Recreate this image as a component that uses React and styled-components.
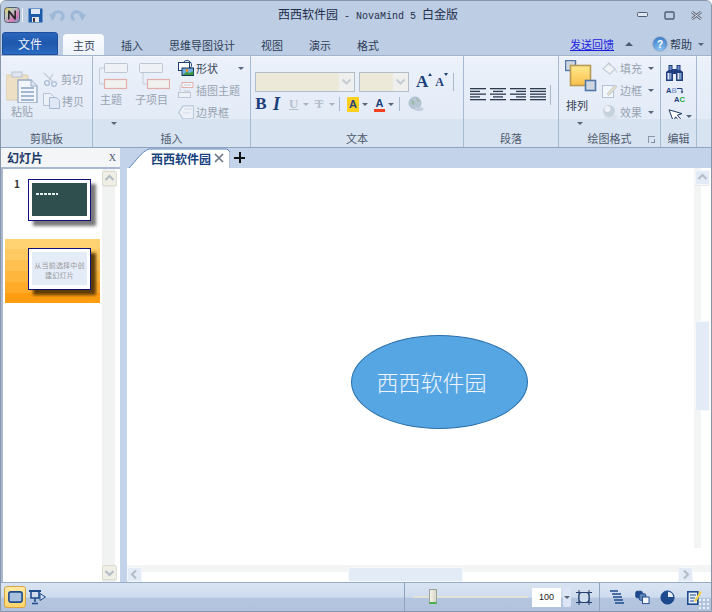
import styled, { createGlobalStyle } from "styled-components";

const Global = createGlobalStyle`
  html, body { margin: 0; padding: 0; background: #fff; }
  #root { width: 712px; height: 612px; overflow: hidden; }
  * { box-sizing: border-box; }
`;

const Win = styled.div`
  width: 712px;
  height: 612px;
  display: flex;
  flex-direction: column;
  border: 1px solid #8796a8;
  border-top-left-radius: 6px;
  border-top-right-radius: 6px;
  background: #bccde4;
  font-family: "Noto Sans CJK SC", sans-serif;
  font-size: 11px;
  color: #4a5666;
  overflow: hidden;
`;

/* title bar */
const TitleBar = styled.div`
  height: 26px;
  flex: none;
  display: flex;
  align-items: center;
  padding: 2px 0 0 3px;
  background: #bccde4;
`;
const QuickBar = styled.div`
  width: 274px;
  display: flex;
  align-items: center;
`;
const QuickDivider = styled.span`
  width: 1px;
  height: 14px;
  margin: 0 5px 0 2px;
  background: #eef3fa;
`;
const QuickGap = styled.span`
  width: ${(p) => p.$w}px;
`;
const Title = styled.div`
  margin-top: -3px;
  font-family: "Liberation Mono", "Noto Sans CJK SC", monospace;
  font-size: 10px;
  color: #1f2f4c;
  white-space: pre;
  span { font-family: "Noto Sans CJK SC", sans-serif; font-size: 12px; }
`;
const WinBtns = styled.div`
  margin-left: auto;
  display: flex;
  align-items: center;
  gap: 16px;
  padding: 0 9px 0 0;
`;

/* tab row */
const TabRow = styled.div`
  height: 28px;
  flex: none;
  display: flex;
  align-items: flex-end;
  padding-left: 1px;
  background: #bccde4;
`;
const FileTab = styled.div`
  width: 56px;
  height: 23px;
  margin-right: 5px;
  border-radius: 3px 3px 0 0;
  border: 1px solid #1d4f9c;
  background: linear-gradient(#2a66bd, #1e58ac 50%, #2b6cc4);
  color: #f2f6fc;
  font-size: 12px;
  display: flex;
  align-items: center;
  justify-content: center;
`;
const Tab = styled.div`
  height: ${(p) => (p.$on ? 21 : 20)}px;
  padding: 0 ${(p) => (p.$on ? "9px 0 10px" : "13px")};
  margin-right: ${(p) => (p.$on ? 4 : 0)}px;
  border-radius: 4px 4px 0 0;
  background: ${(p) => (p.$on ? "linear-gradient(#fbfcfe, #eef3fa)" : "transparent")};
  color: #2e3d55;
  display: flex;
  align-items: center;
  white-space: nowrap;
`;
const TabTools = styled.div`
  margin-left: auto;
  height: 22px;
  display: flex;
  align-items: center;
  padding-right: 7px;
  color: #2e3d55;
`;
const Feedback = styled.a`
  color: #1a1ae0;
  text-decoration: underline;
  margin-right: 11px;
`;
const Help = styled.div`
  display: flex;
  align-items: center;
  gap: 2px;
  margin: 0 6px 0 19px;
`;

/* triangles */
const Drop = styled.i`
  display: inline-block;
  flex: none;
  width: 0;
  height: 0;
  border-left: 3px solid transparent;
  border-right: 3px solid transparent;
  border-top: 3px solid ${(p) => p.$c || "#59677a"};
`;
const Up = styled.i`
  display: inline-block;
  width: 0;
  height: 0;
  border-left: 4px solid transparent;
  border-right: 4px solid transparent;
  border-bottom: 4px solid #4b5a70;
`;
const Caret = styled.i`
  flex: none;
  align-self: flex-start;
  width: 0;
  height: 0;
  margin: 1px ${(p) => p.$mr || 0}px 0 0;
  border-left: 2.5px solid transparent;
  border-right: 2.5px solid transparent;
  border-${(p) => (p.$down ? "top" : "bottom")}: 3px solid #1b3f7a;
`;

/* ribbon */
const Ribbon = styled.div`
  height: 93px;
  flex: none;
  display: flex;
  border-top: 1px solid #9fb3cc;
  border-bottom: 1px solid #8ea3bf;
  background: #e6edf8;
`;
const Group = styled.div`
  width: ${(p) => p.$w}px;
  flex: ${(p) => (p.$w ? "none" : "1")};
  display: flex;
  flex-direction: column;
  border-right: ${(p) => (p.$w ? "1px solid #a6b9d2" : "none")};
`;
const GroupBody = styled.div`
  height: 63px;
  flex: none;
  display: flex;
  padding: ${(p) => p.$pad || "0"};
  border-top: 1px solid #f4f7fc;
  background: linear-gradient(#ecf1fa, #e3ebf7);
`;
const Caption = styled.div`
  flex: 1;
  position: relative;
  display: flex;
  align-items: flex-end;
  justify-content: center;
  padding-bottom: 1px;
  background: #d8e3f2;
  color: #4d5a6c;
  line-height: 16px;
`;
const CaptionDrop = styled.span`
  position: absolute;
  top: 3px;
  left: ${(p) => p.$x}px;
  display: flex;
`;
const Launcher = styled.span`
  position: absolute;
  right: 5px;
  bottom: 4px;
  width: 7px;
  height: 7px;
  border-left: 1px solid #8a97a8;
  border-top: 1px solid #8a97a8;
  &::after {
    content: "";
    position: absolute;
    right: 0;
    bottom: 0;
    width: 3px;
    height: 3px;
    border-right: 1px solid #7f8c9e;
    border-bottom: 1px solid #7f8c9e;
  }
`;
const BigBtn = styled.div`
  width: ${(p) => p.$w}px;
  flex: none;
  display: flex;
  flex-direction: column;
  align-items: ${(p) => (p.$start ? "flex-start" : "center")};
  padding-top: ${(p) => p.$top}px;
  color: ${(p) => (p.$dark ? "#333f50" : "#98a3b1")};
  line-height: 14px;
  svg { margin-left: ${(p) => p.$iconLeft || 0}px; }
`;
const BigLabel = styled.span`
  margin-top: ${(p) => p.$gap}px;
  margin-left: ${(p) => p.$ml || 0}px;
  white-space: nowrap;
`;
const Stack = styled.div`
  display: flex;
  flex-direction: column;
  margin-left: ${(p) => p.$left || 0}px;
  padding-top: ${(p) => p.$top || 0}px;
  width: ${(p) => (p.$w ? p.$w + "px" : "auto")};
`;
const RowBtn = styled.div`
  height: ${(p) => p.$h || 22}px;
  flex: none;
  display: flex;
  align-items: center;
  gap: 2px;
  padding: ${(p) => p.$pt || 0}px 0 0 ${(p) => p.$pl || 0}px;
  color: ${(p) => (p.$dark ? "#3a4657" : "#98a3b1")};
  white-space: nowrap;
  i:last-child { margin-left: auto; }
`;

/* font group */
const FontRows = styled.div`
  display: flex;
  flex-direction: column;
  padding: 15px 0 0 4px;
  width: 100%;
`;
const FontRow = styled.div`
  display: flex;
  align-items: center;
  height: ${(p) => p.$h}px;
  margin-bottom: ${(p) => p.$mb || 0}px;
`;
const Combo = styled.div`
  width: ${(p) => p.$w}px;
  height: 20px;
  flex: none;
  margin-right: ${(p) => p.$mr}px;
  display: flex;
  justify-content: flex-end;
  border: 1px solid #b3bdc9;
  background: #ece9d8;
`;
const ComboBtn = styled.div`
  width: 15px;
  display: flex;
  align-items: center;
  justify-content: center;
  background: #eff0ee;
  svg { display: block; }
`;
const Sep = styled.span`
  width: 1px;
  flex: none;
  height: ${(p) => p.$h}px;
  margin: 0 ${(p) => p.$r || 0}px 0 ${(p) => p.$l || 0}px;
  background: #a9b8cb;
`;
const Glyph = styled.span`
  flex: none;
  width: ${(p) => p.$w}px;
  margin: 0 ${(p) => p.$mr || 0}px 0 ${(p) => p.$ml || 0}px;
  font-family: "Liberation Serif", serif;
  font-size: ${(p) => p.$size}px;
  font-weight: 700;
  font-style: ${(p) => (p.$it ? "italic" : "normal")};
  text-decoration: ${(p) => p.$deco || "none"};
  color: ${(p) => p.$c || "#1b3f7a"};
  text-align: center;
  line-height: 14px;
`;
const Marker = styled.span`
  flex: none;
  width: ${(p) => p.$w}px;
  height: 15px;
  margin: 0 3px 0 ${(p) => p.$ml || 0}px;
  background: ${(p) => p.$bg};
  border-bottom: ${(p) => (p.$line ? `3px solid ${p.$line}` : "none")};
  font-family: "Liberation Sans", sans-serif;
  font-weight: 700;
  font-size: 11px;
  line-height: ${(p) => (p.$line ? 12 : 15)}px;
  text-align: center;
  color: #1f4278;
`;
const AlignRow = styled.div`
  display: flex;
  align-items: center;
  gap: 4px;
  padding: 15px 0 0 6px;
  height: 60px;
`;
const Svg = styled.svg`
  display: block;
  flex: none;
`;
const FlipSvg = styled(Svg)`
  transform: scaleX(-1);
`;

/* main area */
const Main = styled.div`
  flex: 1;
  min-height: 0;
  display: flex;
  background: #c3d3e9;
`;
const Side = styled.div`
  width: 119px;
  flex: none;
  display: flex;
  flex-direction: column;
`;
const SideHead = styled.div`
  height: 21px;
  flex: none;
  display: flex;
  align-items: center;
  justify-content: space-between;
  padding: 0 4px 0 6px;
  background: #f3f5f7;
  border-bottom: 2px solid #a7b8cf;
  font-size: 12px;
  font-weight: 700;
  color: #1e3a66;
`;
const Closer = styled.span`
  font-family: "Liberation Serif", serif;
  font-size: 10px;
  font-weight: 400;
  color: #4b5a70;
`;
const SideBody = styled.div`
  flex: 1;
  min-height: 0;
  display: flex;
  background: #fff;
  border-left: 2px solid #a7b8cf;
`;
const SlideList = styled.div`
  width: 99px;
  flex: none;
  display: flex;
  flex-direction: column;
  padding: 10px 0 0 2px;
`;
const SlideItem = styled.div`
  width: 95px;
  height: ${(p) => p.$h}px;
  flex: none;
  display: flex;
  align-items: flex-start;
  padding: ${(p) => p.$top}px 0 0 23px;
  position: relative;
  background: ${(p) =>
    p.$on
      ? `linear-gradient(#ffd272 0 10px, #ffca62 10px 21px, #ffc050 21px 32px, #ffb63c 32px 43px, #ffaa28 43px 54px, #ff9c10 54px)`
      : "transparent"};
`;
const SlideNo = styled.span`
  position: absolute;
  left: 9px;
  top: -3px;
  font-size: 10px;
  font-weight: 700;
  color: #333;
`;
const Thumb = styled.div`
  width: 63px;
  height: 42px;
  padding: 3px 3px 4px;
  background: #fff;
  border: 1px solid #10107a;
  box-shadow: 5px 5px 3px ${(p) => p.$shadow};
  display: flex;
`;
const ThumbInner = styled.div`
  flex: 1;
  background: ${(p) => p.$bg};
  color: ${(p) => p.$c};
  font-size: ${(p) => p.$size}px;
  letter-spacing: 0.2px;
  line-height: 10px;
  text-align: center;
  padding: ${(p) => p.$pad};
`;
const MiniText = styled.div`
  width: 22px;
  height: 2px;
  margin: 10px 0 0 4px;
  background: repeating-linear-gradient(90deg, #e8eeee 0 3px, #2f4f4f 3px 4px);
`;

const SideRail = styled.div`
  width: 15px;
  flex: none;
  display: flex;
  flex-direction: column;
  justify-content: space-between;
  padding: 2px 0;
  background: linear-gradient(90deg, #f1f3f2 0 13px, #fff 13px);
`;
const Splitter = styled.div`
  width: 7px;
  flex: none;
`;
const Doc = styled.div`
  flex: 1;
  min-width: 0;
  display: flex;
  flex-direction: column;
`;
const DocTabs = styled.div`
  height: 20px;
  flex: none;
  display: flex;
  align-items: flex-end;
  padding-left: 2px;
`;
const DocTab = styled.div`
  width: 101px;
  height: 20px;
  position: relative;
  display: flex;
  align-items: center;
  padding-left: 22px;
  gap: 3px;
  font-size: 12px;
  font-weight: 700;
  color: #17427f;
  svg.shape { position: absolute; left: 0; top: 0; }
  span, svg.x { position: relative; }
`;
const Plus = styled.div`
  margin: 0 0 1px 4px;
  width: 11px;
  height: 11px;
  align-self: center;
  background:
    linear-gradient(#111, #111) center / 11px 2px no-repeat,
    linear-gradient(#111, #111) center / 2px 11px no-repeat;
`;
const CanvasWrap = styled.div`
  flex: 1;
  min-height: 0;
  position: relative;
  display: flex;
  flex-direction: column;
  background: #fff;
`;
const Canvas = styled.div`
  flex: 1;
  position: relative;
`;
const Node = styled.div`
  position: absolute;
  left: 224px;
  top: 167px;
  width: 177px;
  height: 94px;
  border-radius: 50%;
  border: 1px solid #2a6fa9;
  background: #56a6e4;
  color: #eef5fc;
  font-size: 22px;
  font-weight: 300;
  display: flex;
  align-items: center;
  justify-content: center;
  padding: 0 16px 3px 0;
`;
const VScroll = styled.div`
  position: absolute;
  right: 0;
  top: 0;
  bottom: 17px;
  width: 17px;
  background: linear-gradient(90deg, #f3f5f5 0 7px, #fff 7px);
  display: flex;
  flex-direction: column;
  align-items: flex-end;
  padding: 2px 1px 0 0;
`;
const HScroll = styled.div`
  height: 17px;
  flex: none;
  display: flex;
  align-items: flex-end;
  padding-right: 18px;
  background: linear-gradient(#f3f5f5 0 7px, #fff 7px);
`;
const ScrollBtn = styled.div`
  width: ${(p) => p.$w || 15}px;
  height: 15px;
  flex: none;
  display: flex;
  align-items: center;
  justify-content: center;
  border-radius: 2px;
  border: 1px solid ${(p) => (p.$warm ? "#dcdcd0" : "#f4f7fc")};
  background: ${(p) => (p.$warm ? "#efefe6" : "#e3ebf7")};
  box-shadow: 0 1px 0 #e8e8e8;
`;
const VThumb = styled.div`
  width: 15px;
  height: 90px;
  margin-top: 136px;
  border-radius: 2px;
  border: 1px solid #f6f8fc;
  background: #e3ebf7;
`;
const HThumb = styled.div`
  width: 115px;
  height: 15px;
  margin-left: ${(p) => p.$left}px;
  margin-right: auto;
  border-radius: 2px;
  border: 1px solid #f6f8fc;
  background: #e3ebf7;
`;

/* status bar */
const Status = styled.div`
  height: 29px;
  flex: none;
  display: flex;
  align-items: center;
  position: relative;
  padding-left: 3px;
  border-top: 1px solid #98abc5;
  background: linear-gradient(#d9e4f2, #cfdcee 50%, #b4c6df 55%, #b2c4dd);
`;
const ViewBtn = styled.div`
  width: 22px;
  height: 22px;
  display: flex;
  align-items: center;
  justify-content: ${(p) => (p.$on ? "center" : "flex-start")};
  margin-right: 2px;
  border-radius: 3px;
  border: ${(p) => (p.$on ? "1px solid #d9a441" : "1px solid transparent")};
  background: ${(p) => (p.$on ? "linear-gradient(#ffeaa6, #ffd46a)" : "transparent")};
`;
const ZoomBox = styled.div`
  margin-left: auto;
  width: 196px;
  height: 100%;
  display: flex;
  align-items: center;
  padding-left: 8px;
  border-left: 1px solid #8fa3be;
  border-right: 1px solid #8fa3be;
`;
const Slider = styled.div`
  width: 115px;
  height: 2px;
  flex: none;
  position: relative;
  margin-right: 4px;
  background: #e4e1d2;
`;
const SliderThumb = styled.div`
  position: absolute;
  left: 16px;
  top: -7px;
  width: 8px;
  height: 15px;
  border: 1px solid #9aa59a;
  border-bottom: 2px solid #4ab04a;
  background: linear-gradient(90deg, #f4f2ea, #d8d6c8);
`;
const ZoomInput = styled.div`
  width: 29px;
  height: 19px;
  flex: none;
  background: #fff;
  font-family: "Liberation Sans", sans-serif;
  font-size: 9px;
  color: #222;
  line-height: 19px;
  text-align: center;
  margin-right: 2px;
`;
const Spin = styled.div`
  width: 8px;
  height: 19px;
  flex: none;
  display: flex;
  align-items: center;
  justify-content: center;
  margin-right: 5px;
  border-radius: 2px;
  background: #dbe5f3;
`;
const RightTools = styled.div`
  width: 111px;
  flex: none;
  display: flex;
  align-items: center;
  gap: 10px;
  padding-left: 10px;
`;
const Grip = styled.div`
  position: absolute;
  right: 1px;
  bottom: 1px;
  width: 11px;
  height: 11px;
  background: radial-gradient(circle at 1px 1px, #eef3fa 1px, transparent 1.2px) 0 0 / 4px 4px;
`;

/* drawings */
const AppLogo = () => (
  <Svg width="16" height="16" viewBox="0 0 16 16">
    <defs>
      <linearGradient id="lg" x1="0" y1="0" x2="1" y2="1">
        <stop offset="0" stopColor="#f0d050" />
        <stop offset=".35" stopColor="#b8c8c0" />
        <stop offset=".7" stopColor="#d878b8" />
        <stop offset="1" stopColor="#60b0d0" />
      </linearGradient>
    </defs>
    <rect x=".5" y=".5" width="15" height="15" rx="3" fill="url(#lg)" stroke="#55606e" />
    <path d="M4 12.5V3.5h1.6l4.8 6V3.5H12v9h-1.6l-4.8-6v6z" fill="#2a2a2a" />
  </Svg>
);
const Save = () => (
  <Svg width="15" height="15" viewBox="0 0 15 15">
    <path d="M.5.5h14v14H.5z" fill="#1d5ca8" />
    <rect x="3" y="1" width="9" height="5" fill="#dfe8f4" />
    <rect x="4" y="9" width="7" height="5" fill="#e6e6e6" />
    <rect x="5" y="10" width="2" height="4" fill="#3a3a3a" />
  </Svg>
);
const CurvePaths = () => (
  <>
    <path d="M3.5 8C3.5 3 11 1 13.5 5c1.5 2.5 0 5-2 6" fill="none" stroke="#9db8d8" strokeWidth="3" />
    <path d="M0 5l7 1-3.5 6z" fill="#9db8d8" />
  </>
);
const Undo = () => (
  <Svg width="16" height="13" viewBox="0 0 16 13">
    <CurvePaths />
  </Svg>
);
const Redo = () => (
  <FlipSvg width="16" height="13" viewBox="0 0 16 13">
    <CurvePaths />
  </FlipSvg>
);
const MinIcon = () => (
  <Svg width="11" height="6" viewBox="0 0 11 6"><rect x=".5" y=".5" width="10" height="4" rx="1" fill="#dfe7f2" stroke="#4e5d70" /></Svg>
);
const MaxIcon = () => (
  <Svg width="11" height="9" viewBox="0 0 11 9"><rect x="1" y="1" width="9" height="7" rx="1" fill="none" stroke="#4e5d70" strokeWidth="1.4" /></Svg>
);
const CloseIcon = () => (
  <Svg width="11" height="9" viewBox="0 0 11 9"><path d="M1 1l9 7M10 1L1 8" stroke="#5a6778" strokeWidth="2.8" /><path d="M1 1l9 7M10 1L1 8" stroke="#e8eef6" strokeWidth="1" /></Svg>
);
const HelpIcon = () => (
  <Svg width="16" height="16" viewBox="0 0 16 16">
    <defs>
      <radialGradient id="hp" cx=".5" cy=".85" r=".8">
        <stop offset="0" stopColor="#8cc4f4" />
        <stop offset="1" stopColor="#3f7fc8" />
      </radialGradient>
    </defs>
    <circle cx="8" cy="8" r="7.5" fill="url(#hp)" stroke="#a8b8cc" />
    <text x="8" y="12" fontSize="10" fontWeight="700" textAnchor="middle" fill="#fff" fontFamily="Liberation Sans">?</text>
  </Svg>
);
const Paste = () => (
  <Svg width="32" height="32" viewBox="0 0 32 32">
    <rect x="0" y="4" width="22" height="25" rx="1" fill="#ecdfc4" stroke="#d8ccb0" />
    <rect x="6" y="1" width="10" height="5" fill="#dfe6ee" stroke="#b8c4d4" />
    <path d="M12 9h13l6 6v17H12z" fill="#f2f6fb" stroke="#96aac4" strokeWidth="1.3" />
    <path d="M25 9v6h6" fill="#dde6f2" stroke="#96aac4" />
    <path d="M15 17h13M15 21h13M15 25h13M15 29h13" stroke="#8ca4c4" strokeWidth="1.3" />
  </Svg>
);
const Scissors = () => (
  <Svg width="16" height="15" viewBox="0 0 16 15">
    <circle cx="4" cy="11" r="2.4" fill="none" stroke="#a9bdd8" strokeWidth="1.3" />
    <circle cx="11" cy="12" r="2.4" fill="none" stroke="#a9bdd8" strokeWidth="1.3" />
    <path d="M1 1l9 9M5.5 9L10 2" stroke="#c2cad4" strokeWidth="1.3" />
  </Svg>
);
const Copy = () => (
  <Svg width="17" height="16" viewBox="0 0 17 16">
    <path d="M.5.5h7l3 3v9H.5z" fill="#eef2f8" stroke="#b2c2d8" />
    <path d="M6.5 4.5h7l3 3v8h-10z" fill="#dfe8f4" stroke="#a6b9d2" />
  </Svg>
);
const Topic = ({ child }) => (
  <Svg width="31" height="27" viewBox="0 0 31 27">
    <rect x={child ? 0.5 : 5.5} y="0.5" width="23" height="9" rx="1" fill="#eef2f7" stroke="#bcc7d3" />
    <path d={child ? "M4 10v11h4" : "M5 5H.5v16H5"} fill="none" stroke="#c3ccd6" />
    <rect x={child ? 8.5 : 5.5} y="16.5" width="22" height="9" fill="#f1f1ef" stroke="#e2b0ab" strokeWidth="1.2" />
  </Svg>
);
const ShapeIcon = () => (
  <Svg width="16" height="16" viewBox="0 0 16 16">
    <circle cx="9" cy="5" r="4.5" fill="#fff" stroke="#1d3f72" />
    <rect x=".5" y="2.5" width="11" height="8" fill="#fff" stroke="#1d3f72" />
    <rect x="4" y="8" width="11.5" height="7.5" fill="#6fb0e0" stroke="#14305c" />
    <path d="M4.5 15l4-3 3 1 4-2v4z" fill="#3d9a40" />
    <circle cx="9" cy="10.5" r="1.4" fill="#f0902a" />
  </Svg>
);
const PicTheme = () => (
  <Svg width="16" height="16" viewBox="0 0 16 16">
    <rect x="4" y=".5" width="11" height="5" fill="#f4f6f9" stroke="#e2b0ab" />
    <path d="M6 3h7M6 9h6" stroke="#c3ccd6" />
    <path d="M2 3v9" stroke="#ccd4de" />
    <rect x=".5" y="10.5" width="12" height="5" fill="#eef2f7" stroke="#bcc7d3" />
  </Svg>
);
const Boundary = () => (
  <Svg width="16" height="15" viewBox="0 0 16 15">
    <path d="M5 .8h10.5v13H5L.8 7.5z" fill="#eef2f8" stroke="#bcc9da" strokeWidth="1.3" />
    <path d="M6 4h8M5 8h7" stroke="#d3dbe6" />
  </Svg>
);
const Arrow = () => (
  <Svg width="11" height="8" viewBox="0 0 11 8"><path d="M1.5 1.5l4 4 4-4" fill="none" stroke="#c6ccd3" strokeWidth="2" /></Svg>
);
const Globe = () => (
  <Svg width="16" height="16" viewBox="0 0 16 16">
    <circle cx="7" cy="7" r="6" fill="#b6c8d6" stroke="#a8bccd" />
    <path d="M3 4l3 1 1 3-3 1zM8 2l3 2-1 3z" fill="#9fbaa8" />
    <ellipse cx="11" cy="13" rx="4.5" ry="2" fill="#c3cfdc" />
  </Svg>
);
const AlignIcon = ({ kind }) => {
  const rows = {
    left: [[0, 16], [0, 10], [0, 16], [0, 10], [0, 16]],
    center: [[0, 16], [3, 10], [0, 16], [3, 10], [0, 16]],
    right: [[0, 16], [6, 10], [0, 16], [6, 10], [0, 16]],
    full: [[0, 16], [0, 16], [0, 16], [0, 16], [0, 16]],
  }[kind];
  return (
    <Svg width="16" height="13" viewBox="0 0 16 13">
      {rows.map(([x, w], i) => (
        <rect key={i} x={x} y={i * 2.75} width={w} height="1.3" fill="#2d3a4e" />
      ))}
    </Svg>
  );
};
const Arrange = () => (
  <Svg width="32" height="32" viewBox="0 0 32 32">
    <rect x=".5" y=".5" width="10" height="10" fill="#cfd6e0" stroke="#4f78a8" strokeWidth="1.4" />
    <defs>
      <linearGradient id="ar" x1="0" y1="0" x2="0" y2="1">
        <stop offset="0" stopColor="#ffe98e" />
        <stop offset="1" stopColor="#f9bf4c" />
      </linearGradient>
    </defs>
    <rect x="5.5" y="5.5" width="20" height="20" fill="url(#ar)" stroke="#b99a55" strokeWidth="1.6" />
    <rect x="20.5" y="20.5" width="10" height="10" fill="#cfd6e0" stroke="#4f78a8" strokeWidth="1.6" />
  </Svg>
);
const Fill = () => (
  <Svg width="16" height="15" viewBox="0 0 16 15">
    <path d="M1 8l6-6 6 6-5 5z" fill="#f1f3f6" stroke="#c3cdd9" strokeWidth="1.2" />
    <path d="M6 1l2 4M13 8c1 2 2 3 1.5 4" stroke="#c3cdd9" fill="none" />
  </Svg>
);
const Border = () => (
  <Svg width="16" height="15" viewBox="0 0 16 15">
    <rect x=".5" y="2.5" width="11" height="12" fill="#f4f7fb" stroke="#b2c2d8" />
    <path d="M5 11l8-9 2 1.5-8 9z" fill="#e6dfc4" stroke="#c3cdd9" />
  </Svg>
);
const Effect = () => (
  <Svg width="16" height="16" viewBox="0 0 16 16">
    <ellipse cx="9" cy="12.5" rx="6.5" ry="3" fill="#dbe2ea" />
    <circle cx="7" cy="7" r="6" fill="#c6d1de" />
    <circle cx="5.5" cy="5" r="3" fill="#eef2f7" />
  </Svg>
);
const Binoculars = () => (
  <Svg width="17" height="16" viewBox="0 0 17 16">
    <path d="M2.5 0h4v4h4V0h4v5l2.5 2v9h-7V9h-3v7H0V7l2.5-2z" fill="#1f3f80" />
    <rect x="3.5" y="1" width="2" height="4" fill="#6f8fc4" />
    <rect x="11.5" y="1" width="2" height="4" fill="#6f8fc4" />
    <rect x="1.5" y="8" width="2" height="6.5" fill="#dfe8f6" />
    <rect x="3.5" y="8" width="2" height="6.5" fill="#7f9bc8" />
    <rect x="11.5" y="8" width="2" height="6.5" fill="#dfe8f6" />
    <rect x="13.5" y="8" width="2" height="6.5" fill="#7f9bc8" />
  </Svg>
);
const Replace = () => (
  <Svg width="21" height="16" viewBox="0 0 21 16">
    <text x="0" y="7" fontSize="7.5" fontWeight="700" fontFamily="Liberation Sans" fill="#1f3f80">A</text>
    <text x="5.5" y="7" fontSize="7.5" fontWeight="700" fontFamily="Liberation Sans" fill="#8ea4c8">B</text>
    <path d="M11 2.5h5V6" fill="none" stroke="#1f3f80" />
    <path d="M14.5 5.5h3l-1.5 2z" fill="#1f3f80" />
    <text x="8" y="15.5" fontSize="7.5" fontWeight="700" fontFamily="Liberation Sans" fill="#1f3f80">A</text>
    <text x="13.5" y="15.5" fontSize="7.5" fontWeight="700" fontFamily="Liberation Sans" fill="#22a83a">C</text>
  </Svg>
);
const Pointer = () => (
  <Svg width="15" height="14" viewBox="0 0 15 14">
    <path d="M1 .8l4.4 11.6 2.2-4.6 4.2 5 1.8-1.6-4.2-5 4.6-1.6z" fill="#fff" stroke="#1c3a66" />
  </Svg>
);
const Chevron = ({ dir, color = "#b5bdc8" }) => (
  <Svg width="11" height="11" viewBox="0 0 11 11">
    <path
      d={{ up: "M1.5 7l4-4 4 4", down: "M1.5 4l4 4 4-4", left: "M7 1.5l-4 4 4 4", right: "M4 1.5l4 4-4 4" }[dir]}
      fill="none"
      stroke={color}
      strokeWidth="2.2"
    />
  </Svg>
);
const TabShape = () => (
  <Svg className="shape" width="101" height="20" viewBox="0 0 101 20">
    <path d="M0 20C8 12 12 4 20 1h78l3 3v16z" fill="#fff" />
    <path d="M0 20C8 12 12 4 20 1h78l3 3v16" fill="none" stroke="#5f86b8" />
  </Svg>
);
const TabClose = () => (
  <Svg className="x" width="10" height="10" viewBox="0 0 10 10"><path d="M1 1l8 8M9 1L1 9" stroke="#6b7786" strokeWidth="1.7" /></Svg>
);
const NormalView = () => (
  <Svg width="15" height="12" viewBox="0 0 15 12"><rect x=".9" y=".9" width="13.2" height="10.2" rx="2" fill="#a9c0de" stroke="#1d4a8c" strokeWidth="1.6" /></Svg>
);
const ShowView = () => (
  <Svg width="17" height="15" viewBox="0 0 17 15">
    <rect x="0" y="0" width="12" height="2" fill="#1d4a8c" />
    <path d="M2 2v6h8V2M6 8v4M3 13.5h6" fill="none" stroke="#1d4a8c" strokeWidth="1.6" />
    <path d="M11 3.5l5.5 3.5L11 10.5z" fill="#cfdcee" stroke="#1d4a8c" />
  </Svg>
);
const Fit = () => (
  <Svg width="16" height="15" viewBox="0 0 16 15">
    <path d="M3 0v15M13 0v15M0 2.5h16M0 12.5h16" stroke="#24406e" />
    <rect x="3" y="2.5" width="10" height="10" rx="3" fill="#cfdcee" stroke="#24406e" strokeWidth="1.2" />
  </Svg>
);
const Outline = () => (
  <Svg width="15" height="14" viewBox="0 0 15 14">
    <path d="M0 1h8M2 4h9M3 7h9M4 10h9M5 13h9" stroke="#1d4a8c" strokeWidth="1.5" />
  </Svg>
);
const Layers = () => (
  <Svg width="15" height="15" viewBox="0 0 16 15">
    <rect x=".8" y=".8" width="7" height="7" rx="1.5" fill="#1d4a8c" stroke="#1d4a8c" />
    <rect x="4.5" y="3.5" width="7" height="7" rx="1.5" fill="#5f86b8" stroke="#1d4a8c" />
    <rect x="8" y="7" width="7" height="7" fill="#f2f6fb" stroke="#1d4a8c" />
  </Svg>
);
const Pie = () => (
  <Svg width="15" height="15" viewBox="0 0 15 15">
    <circle cx="7.5" cy="7.5" r="6.6" fill="#1d4a8c" stroke="#1d4a8c" />
    <path d="M8 1.8A5.7 5.7 0 0 1 13.2 7H8z" fill="#e8eef8" />
  </Svg>
);
const Notes = () => (
  <Svg width="17" height="15" viewBox="-2 0 17 15">
    <rect x=".8" y="1.8" width="10" height="12.4" fill="#e8eef8" stroke="#1d4a8c" strokeWidth="1.6" />
    <path d="M3 5h6M3 8h5M3 11h4" stroke="#1d4a8c" strokeWidth="1.2" />
    <path d="M7 11l6-10 2 1-6 10z" fill="#f4d24a" />
  </Svg>
);

export default function App() {
  return (
    <>
      <Global />
      <Win>
        <TitleBar>
          <QuickBar>
            <AppLogo />
            <QuickDivider />
            <Save />
            <QuickGap $w={6} />
            <Undo />
            <QuickGap $w={5} />
            <Redo />
          </QuickBar>
          <Title>
            <span>西西软件园</span> - NovaMind 5 <span>白金版</span>
          </Title>
          <WinBtns>
            <MinIcon />
            <MaxIcon />
            <CloseIcon />
          </WinBtns>
        </TitleBar>

        <TabRow>
          <FileTab>文件</FileTab>
          <Tab $on>主页</Tab>
          <Tab>插入</Tab>
          <Tab>思维导图设计</Tab>
          <Tab>视图</Tab>
          <Tab>演示</Tab>
          <Tab>格式</Tab>
          <TabTools>
            <Feedback>发送回馈</Feedback>
            <Up />
            <Help>
              <HelpIcon />
              帮助
            </Help>
            <Drop />
          </TabTools>
        </TabRow>

        <Ribbon>
          <Group $w={92}>
            <GroupBody $pad="0 0 0 4px">
              <BigBtn $w={34} $top={14}>
                <Paste />
                <BigLabel $gap={1}>粘贴</BigLabel>
              </BigBtn>
              <Stack $left={4} $top={11}>
                <RowBtn>
                  <Scissors />
                  剪切
                </RowBtn>
                <RowBtn>
                  <Copy />
                  拷贝
                </RowBtn>
              </Stack>
            </GroupBody>
            <Caption>剪贴板</Caption>
          </Group>

          <Group $w={158}>
            <GroupBody $pad="0 0 0 6px">
              <BigBtn $w={36} $top={6} $start>
                <Topic />
                <BigLabel $gap={2} $ml={1}>主题</BigLabel>
              </BigBtn>
              <BigBtn $w={37} $top={6} $start $iconLeft={4}>
                <Topic child />
                <BigLabel $gap={2}>子项目</BigLabel>
              </BigBtn>
              <Stack $left={6} $w={66}>
                <RowBtn $dark>
                  <ShapeIcon />
                  形状
                  <Drop />
                </RowBtn>
                <RowBtn>
                  <PicTheme />
                  插图主题
                </RowBtn>
                <RowBtn>
                  <Boundary />
                  边界框
                </RowBtn>
              </Stack>
            </GroupBody>
            <Caption>
              <CaptionDrop $x={18}>
                <Drop />
              </CaptionDrop>
              插入
            </Caption>
          </Group>

          <Group $w={213}>
            <GroupBody>
              <FontRows>
                <FontRow $h={20} $mb={5}>
                  <Combo $w={100} $mr={4}>
                    <ComboBtn>
                      <Arrow />
                    </ComboBtn>
                  </Combo>
                  <Combo $w={50} $mr={7}>
                    <ComboBtn>
                      <Arrow />
                    </ComboBtn>
                  </Combo>
                  <Glyph $w={12} $size={17}>A</Glyph>
                  <Caret $mr={3} />
                  <Glyph $w={9} $size={12}>A</Glyph>
                  <Caret $down $mr={5} />
                  <Sep $h={18} />
                </FontRow>
                <FontRow $h={14}>
                  <Glyph $w={12} $mr={4} $size={17}>B</Glyph>
                  <Glyph $w={11} $mr={7} $size={18} $it>I</Glyph>
                  <Glyph $w={9} $mr={5} $size={13} $c="#b5c0ce" $deco="underline">U</Glyph>
                  <Drop $c="#a8b2c0" />
                  <Glyph $w={12} $mr={4} $ml={4} $size={13} $c="#b5c0ce" $deco="line-through">T</Glyph>
                  <Drop $c="#a8b2c0" />
                  <Sep $h={14} $l={4} $r={7} />
                  <Marker $w={12} $bg="#ffd020">A</Marker>
                  <Drop />
                  <Marker $w={11} $ml={6} $bg="transparent" $line="#f04020">A</Marker>
                  <Drop />
                  <Sep $h={14} $l={5} $r={8} />
                  <Globe />
                </FontRow>
              </FontRows>
            </GroupBody>
            <Caption>文本</Caption>
          </Group>

          <Group $w={95}>
            <GroupBody>
              <AlignRow>
                <AlignIcon kind="left" />
                <AlignIcon kind="center" />
                <AlignIcon kind="right" />
                <AlignIcon kind="full" />
                <Sep $h={20} />
              </AlignRow>
            </GroupBody>
            <Caption>段落</Caption>
          </Group>

          <Group $w={102}>
            <GroupBody $pad="0 0 0 6px">
              <BigBtn $w={32} $top={3} $dark $start>
                <Arrange />
                <BigLabel $gap={6} $ml={1}>排列</BigLabel>
              </BigBtn>
              <Stack $left={5} $w={52}>
                <RowBtn>
                  <Fill />
                  填充
                  <Drop />
                </RowBtn>
                <RowBtn>
                  <Border />
                  边框
                  <Drop />
                </RowBtn>
                <RowBtn>
                  <Effect />
                  效果
                  <Drop />
                </RowBtn>
              </Stack>
            </GroupBody>
            <Caption>
              <CaptionDrop $x={18}>
                <Drop />
              </CaptionDrop>
              绘图格式
              <Launcher />
            </Caption>
          </Group>

          <Group $w={36}>
            <GroupBody $pad="0 0 0 5px">
              <Stack $w={26}>
                <RowBtn $h={26} $pt={5}>
                  <Binoculars />
                </RowBtn>
                <RowBtn>
                  <Replace />
                </RowBtn>
                <RowBtn $pl={2}>
                  <Pointer />
                  <Drop />
                </RowBtn>
              </Stack>
            </GroupBody>
            <Caption>编辑</Caption>
          </Group>

          <Group>
            <GroupBody />
            <Caption />
          </Group>
        </Ribbon>

        <Main>
          <Side>
            <SideHead>
              幻灯片
              <Closer>X</Closer>
            </SideHead>
            <SideBody>
              <SlideList>
                <SlideItem $h={60} $top={0}>
                  <SlideNo>1</SlideNo>
                  <Thumb $shadow="#7a7a7a">
                    <ThumbInner $bg="#2f4f4f" $c="#fff" $size={4} $pad="0">
                      <MiniText />
                    </ThumbInner>
                  </Thumb>
                </SlideItem>
                <SlideItem $on $h={64} $top={9}>
                  <Thumb $shadow="#5e3c06">
                    <ThumbInner $bg="#e4ecf8" $c="#9a9a9a" $size={7} $pad="8px 0 0">
                      从当前选择中创建幻灯片
                    </ThumbInner>
                  </Thumb>
                </SlideItem>
              </SlideList>
              <SideRail>
                <ScrollBtn $warm>
                  <Chevron dir="up" />
                </ScrollBtn>
                <ScrollBtn $warm>
                  <Chevron dir="down" />
                </ScrollBtn>
              </SideRail>
            </SideBody>
          </Side>
          <Splitter />
          <Doc>
            <DocTabs>
              <DocTab>
                <TabShape />
                <span>西西软件园</span>
                <TabClose />
              </DocTab>
              <Plus />
            </DocTabs>
            <CanvasWrap>
              <Canvas>
                <Node>西西软件园</Node>
                <VScroll>
                  <ScrollBtn>
                    <Chevron dir="up" />
                  </ScrollBtn>
                  <VThumb />
                </VScroll>
              </Canvas>
              <HScroll>
                <ScrollBtn>
                  <Chevron dir="left" />
                </ScrollBtn>
                <HThumb $left={206} />
                <ScrollBtn>
                  <Chevron dir="right" />
                </ScrollBtn>
              </HScroll>
            </CanvasWrap>
          </Doc>
        </Main>

        <Status>
          <ViewBtn $on>
            <NormalView />
          </ViewBtn>
          <ViewBtn>
            <ShowView />
          </ViewBtn>
          <ZoomBox>
            <Slider>
              <SliderThumb />
            </Slider>
            <ZoomInput>100</ZoomInput>
            <Spin>
              <Drop />
            </Spin>
            <Fit />
          </ZoomBox>
          <RightTools>
            <Outline />
            <Layers />
            <Pie />
            <Notes />
          </RightTools>
          <Grip />
        </Status>
      </Win>
    </>
  );
}
